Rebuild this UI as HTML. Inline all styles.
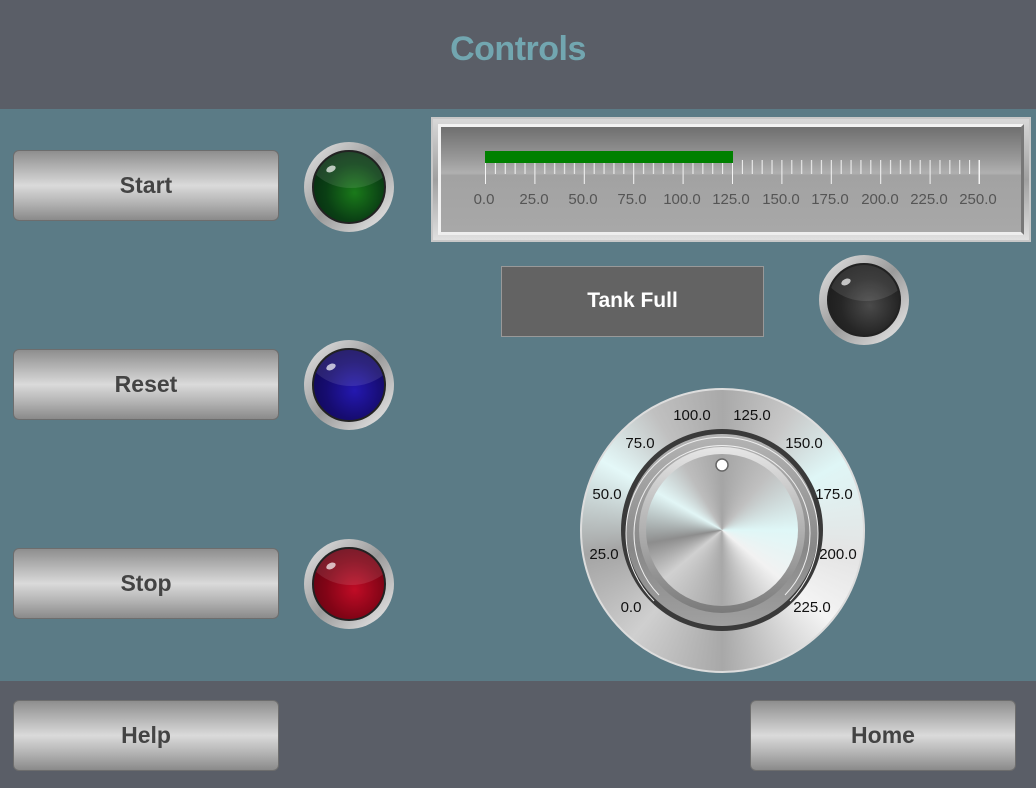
<!DOCTYPE html>
<html><head><meta charset="utf-8"><style>
*{margin:0;padding:0;box-sizing:border-box}
body{width:1036px;height:788px;background:#5b7b86;position:relative;overflow:hidden;font-family:"Liberation Sans",sans-serif}
.hdr{position:absolute;left:0;top:0;width:1036px;height:109px;background:#5a5e67}
.hdr div{position:absolute;left:0;right:0;top:30px;text-align:center;font-size:34px;font-weight:bold;color:#72a6b0;letter-spacing:-0.5px}
.ftr{position:absolute;left:0;top:681px;width:1036px;height:107px;background:#5a5e67}
.btn{position:absolute;width:266px;height:71px;border-radius:6px;border:1px solid #6d6d6d;
background:linear-gradient(#8e8e8e 0%,#b4b4b4 25%,#dadada 50%,#b4b4b4 75%,#8a8a8a 100%);
text-align:center;line-height:69px;font-size:23px;font-weight:bold;color:#444}
.lamp{position:absolute;width:90px;height:90px;border-radius:50%;
background:linear-gradient(135deg,#e8e8e8,#9a9a9a 50%,#f0f0f0);overflow:hidden}
.lamp i{position:absolute;left:8px;top:8px;width:74px;height:74px;border-radius:50%;border:2px solid #222;overflow:hidden}
.lamp i:after{content:"";position:absolute;left:-10px;top:-44px;width:94px;height:80px;border-radius:50%;background:rgba(255,255,255,.10)}
.lamp b{position:absolute;left:22px;top:24px;width:10px;height:6px;border-radius:50%;background:rgba(255,255,255,.7);transform:rotate(-25deg)}
.tank{position:absolute;left:501px;top:266px;width:263px;height:71px;background:#636363;border:1px solid #999;color:#fff;font-weight:bold;font-size:21px;text-align:center;line-height:68px}
.gauge{position:absolute;left:431px;top:117px;width:600px;height:125px;border:2px solid #c8c8c8;
background:linear-gradient(#d8d8d8,#a0a0a0 50%,#e0e0e0)}
.gin{position:absolute;left:5px;top:5px;right:5px;bottom:5px;border:3px solid #f2f2f2;border-right-color:#777;border-bottom-color:#eee;
background:linear-gradient(#6f6f6f 0%,#999 30%,#b0b0b0 44%,#a2a2a2 46%,#a8a8a8 100%)}
</style></head><body>
<div class="hdr"><div>Controls</div></div>
<div class="btn" style="left:13px;top:150px">Start</div>
<div class="btn" style="left:13px;top:349px">Reset</div>
<div class="btn" style="left:13px;top:548px">Stop</div>
<div class="lamp" style="left:304px;top:142px"><i style="background:radial-gradient(ellipse at 58% 58%,#1a7a1a,#0a3f14 50%,#052010)"></i><b></b></div>
<div class="lamp" style="left:304px;top:340px"><i style="background:radial-gradient(ellipse at 58% 58%,#2418b0,#160c70 50%,#0c0648)"></i><b></b></div>
<div class="lamp" style="left:304px;top:539px"><i style="background:radial-gradient(ellipse at 58% 58%,#c00c26,#820416 50%,#520210)"></i><b></b></div>
<div class="lamp" style="left:819px;top:255px"><i style="background:radial-gradient(ellipse at 58% 58%,#4a4a4a,#262626 50%,#161616)"></i><b></b></div>
<div class="gauge"><div class="gin"></div></div>
<svg style="position:absolute;left:0;top:0" width="1036" height="788">
<defs><pattern id="tk" x="485" y="0" width="49.4" height="200" patternUnits="userSpaceOnUse">
<rect x="0" y="160" width="1" height="24" fill="#f4f4f4"/>
<rect x="9.88" y="160" width="1" height="14" fill="#f4f4f4"/>
<rect x="19.76" y="160" width="1" height="14" fill="#f4f4f4"/>
<rect x="29.64" y="160" width="1" height="14" fill="#f4f4f4"/>
<rect x="39.52" y="160" width="1" height="14" fill="#f4f4f4"/>
</pattern></defs>
<rect x="484" y="160" width="497" height="25" fill="url(#tk)"/>
<rect x="978.5" y="160" width="1" height="24" fill="#f4f4f4"/>
<rect x="485" y="151" width="248" height="12" fill="#008000"/>
<g font-size="15" fill="#555" text-anchor="middle">
<text x="484" y="204">0.0</text><text x="534" y="204">25.0</text><text x="583" y="204">50.0</text><text x="632" y="204">75.0</text><text x="682" y="204">100.0</text><text x="731" y="204">125.0</text><text x="781" y="204">150.0</text><text x="830" y="204">175.0</text><text x="880" y="204">200.0</text><text x="929" y="204">225.0</text><text x="978" y="204">250.0</text>
</g>
</svg>
<div class="tank">Tank Full</div>
<div style="position:absolute;left:580px;top:388px;width:285px;height:285px;border-radius:50%;border:2px solid #ddd;background:conic-gradient(from 0deg,#a9a9a9,#c8c8c8 30deg,#dff6f6 60deg,#e4e4e4 100deg,#f4f4f4 130deg,#a8a8a8 180deg,#cfcfcf 220deg,#a4a4a4 260deg,#e4f8f8 300deg,#c0c0c0 330deg,#a9a9a9)"></div>
<div style="position:absolute;left:621px;top:429px;width:202px;height:202px;border-radius:50%;background:#3a3a3a"></div>
<div style="position:absolute;left:626px;top:434px;width:192px;height:192px;border-radius:50%;background:linear-gradient(#b4b4b4,#888 60%,#a0a0a0)"></div>
<div style="position:absolute;left:639px;top:447px;width:166px;height:166px;border-radius:50%;background:linear-gradient(#e6e6e6,#7a7a7a);"></div>
<div style="position:absolute;left:646px;top:454px;width:152px;height:152px;border-radius:50%;background:conic-gradient(from 0deg,#a5a5a5,#c0c0c0 40deg,#dff7f7 90deg,#f2f2f2 130deg,#a8a8a8 180deg,#d0d0d0 230deg,#8d8d8d 260deg,#e2f6f6 300deg,#bdbdbd 330deg,#a5a5a5)"></div>
<svg style="position:absolute;left:0;top:0" width="1036" height="788">
<path d="M654 601 A96 96 0 1 1 790 601" fill="none" stroke="#eee" stroke-width="1"/>
<path d="M659 595 A88 88 0 1 1 785 595" fill="none" stroke="#eee" stroke-width="1"/>
<circle cx="722" cy="465" r="6" fill="#fff" stroke="#666" stroke-width="1.5"/>
<g font-size="15" fill="#111" text-anchor="middle">
<text x="631" y="612">0.0</text><text x="604" y="559">25.0</text><text x="607" y="499">50.0</text><text x="640" y="448">75.0</text><text x="692" y="420">100.0</text><text x="752" y="420">125.0</text><text x="804" y="448">150.0</text><text x="834" y="499">175.0</text><text x="838" y="559">200.0</text><text x="812" y="612">225.0</text>
</g>
</svg>
<div class="ftr"></div>
<div class="btn" style="left:13px;top:700px">Help</div>
<div class="btn" style="left:750px;top:700px">Home</div>
</body></html>
